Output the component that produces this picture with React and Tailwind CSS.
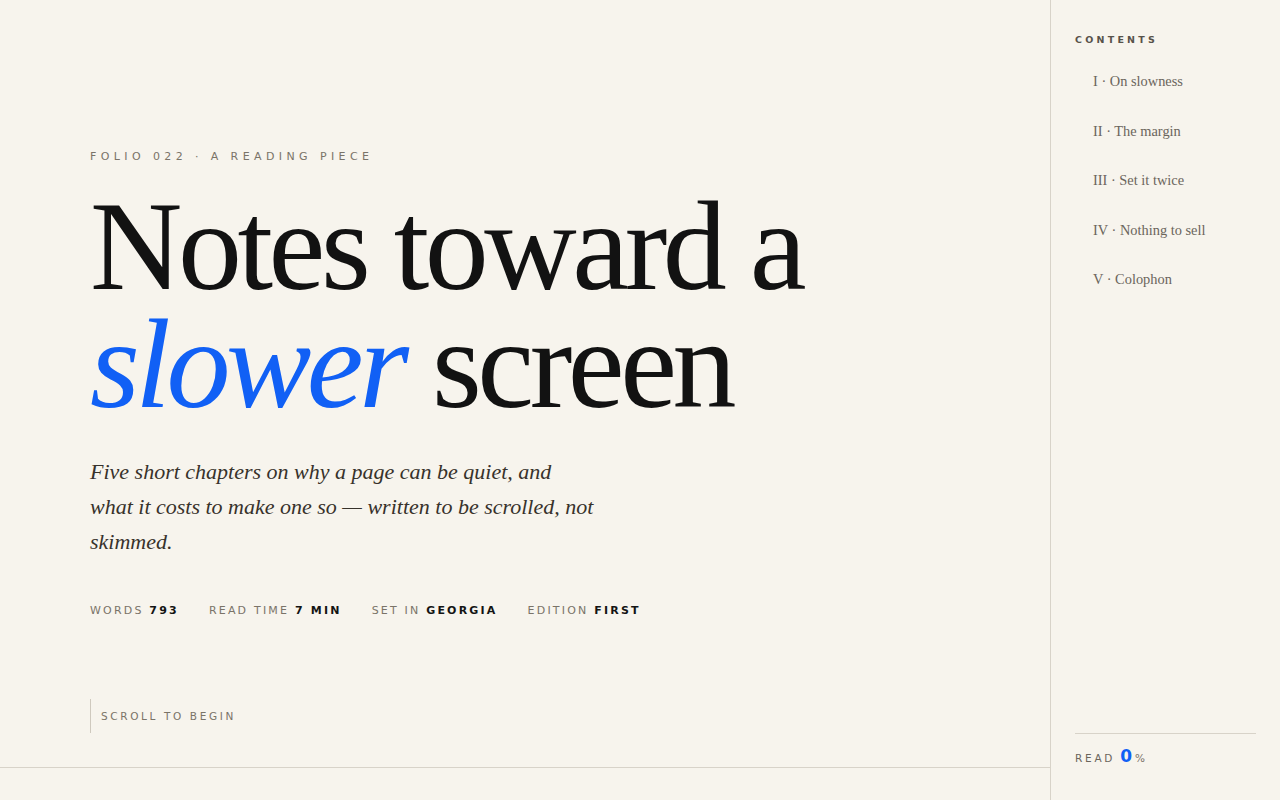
const CHAPTERS = [
  'I · On slowness',
  'II · The margin',
  'III · Set it twice',
  'IV · Nothing to sell',
  'V · Colophon',
]

const META = [
  ['Words', '793'],
  ['Read time', '7 min'],
  ['Set in', 'Georgia'],
  ['Edition', 'First'],
]

const serif = "font-['Liberation_Serif',Georgia,serif]"
const sans = "font-['DejaVu_Sans',Verdana,sans-serif]"

export default function App() {
  return (
    <div className="flex min-h-screen bg-[#f7f4ed] text-[#141414]">
      <main className="flex-1 min-w-0">
        <section className="h-[768px] border-b border-[#d8d3c9] pl-[90px] pt-[149px] flex flex-col">
          <p className={`${sans} text-[11px] leading-4 tracking-[0.4em] uppercase text-[#7a7368]`}>
            Folio 022 · A reading piece
          </p>

          <h1 className={`${serif} mt-[23px] text-[128px] leading-[0.92] tracking-[-0.035em] text-[#121212]`}>
            Notes toward a
            <br />
            <em className="text-[#1160f5]">slower</em> screen
          </h1>

          <p className={`${serif} mt-[30px] max-w-[508px] italic text-[22px] leading-[35px] text-[#37322b]`}>
            Five short chapters on why a page can be quiet, and what it costs to make one so — written to be scrolled, not skimmed.
          </p>

          <div className={`${sans} mt-[44px] flex gap-[30px] text-[11px] leading-4 tracking-[0.2em] uppercase`}>
            {META.map(([label, value]) => (
              <span key={label} className="text-[#7a7368]">
                {label} <b className="text-[#141414] font-bold">{value}</b>
              </span>
            ))}
          </div>

          <div className="mt-auto mb-[34px] flex items-center h-[34px] border-l border-[#cfc9be]">
            <span className={`${sans} pl-[10px] pt-[1px] text-[10.5px] tracking-[0.25em] uppercase text-[#7a7368]`}>
              Scroll to begin
            </span>
          </div>
        </section>
      </main>

      <aside className="sticky top-0 h-screen w-[230px] shrink-0 border-l border-[#d8d3c9] flex flex-col pl-[24px] pr-[24px]">
        <h2 className={`${sans} mt-[34px] text-[9.5px] leading-3 font-bold tracking-[0.34em] uppercase text-[#57524a]`}>
          Contents
        </h2>
        <nav className="mt-[11px] flex flex-col">
          {CHAPTERS.map(c => (
            <a
              key={c}
              href="#"
              className={`${serif} pl-[18px] py-[14px] text-[14.4px] leading-[21.5px] text-[#6b655c] hover:text-[#141414]`}
            >
              {c}
            </a>
          ))}
        </nav>
        <div className="mt-auto mb-[33px] border-t border-[#d8d3c9] pt-[14px] flex items-baseline gap-[5px]">
          <span className={`${sans} text-[10.5px] tracking-[0.26em] uppercase text-[#6b655c]`}>Read</span>
          <span className={`${sans} text-[17px] font-bold text-[#1160f5] leading-none`}>
            0<span className="ml-[3px] text-[10.5px] font-normal text-[#7a7368]">%</span>
          </span>
        </div>
      </aside>
    </div>
  )
}
